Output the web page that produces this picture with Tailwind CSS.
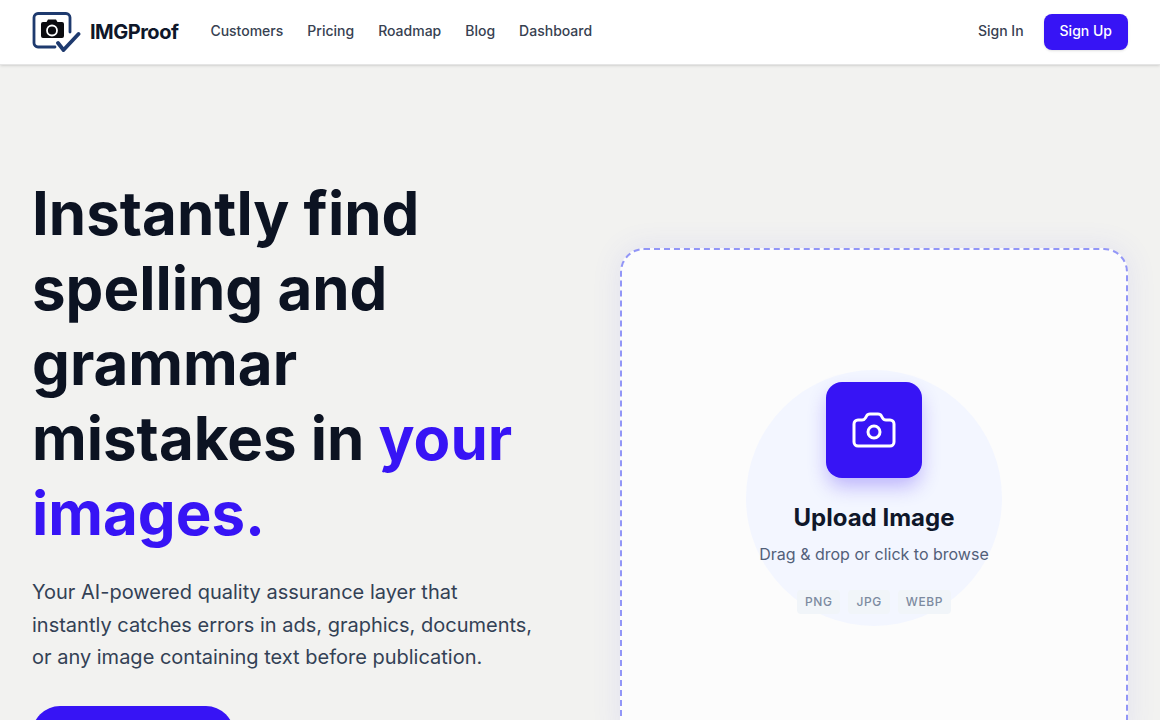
<!DOCTYPE html>
<html lang="en">
  <head>
    <meta charset="UTF-8" />
    <meta name="viewport" content="width=device-width, initial-scale=1.0" />
    <title>IMGProof</title>
    <script src="https://cdn.jsdelivr.net/npm/@tailwindcss/browser@4"></script>
  </head>
  <body class="bg-[#f2f2f0] font-['Inter',sans-serif] antialiased">
    <div class="h-[720px] overflow-hidden">
      <!-- nav -->
      <header class="relative z-10 bg-white h-[65px] border-b border-[#e5e5e5] shadow-sm flex items-center justify-between px-8">
        <div class="flex items-center">
          <a class="flex items-center gap-[9px] mr-8">
            <svg class="w-[49px] h-[42px]" viewBox="0 0 49 42" fill="none">
              <path d="M23 36H6a4 4 0 0 1-4-4V6.500a4 4 0 0 1 4-4h28a4 4 0 0 1 4 4V21" stroke="#1e3a6e" stroke-width="2.800" stroke-linecap="round" />
              <path d="M9 13a2 2 0 0 1 2-2h3.500l1.500-2.500h8l1.500 2.500H30a2 2 0 0 1 2 2v12a2 2 0 0 1-2 2H11a2 2 0 0 1-2-2z" fill="#0b0b0f" />
              <circle cx="20" cy="19.500" r="5" fill="#0b0b0f" stroke="#fff" stroke-width="1.800" />
              <path d="M26 32l5.500 7L46.500 23" stroke="#1e3a6e" stroke-width="3.800" stroke-linecap="round" stroke-linejoin="round" />
            </svg>
            <span class="text-[20px] font-bold tracking-[-0.5px] text-[#0f172a]">IMGProof</span>
          </a>
          <nav class="flex items-center gap-6 text-sm font-medium text-[#374151] pb-0.5">
            <a>Customers</a>
            <a>Pricing</a>
            <a>Roadmap</a>
            <a>Blog</a>
            <a>Dashboard</a>
          </nav>
        </div>
        <div class="flex items-center gap-5 text-sm font-medium">
          <a class="text-[#374151] pb-0.5">Sign In</a>
          <a class="bg-[#3714f5] text-white h-9 px-4 pb-0.5 rounded-lg flex items-center shadow-sm">Sign Up</a>
        </div>
      </header>

      <!-- hero -->
      <main class="grid grid-cols-2 gap-20 px-8 pt-[111px]">
        <div>
          <h1 class="text-[60px] leading-[75px] font-bold text-[#0c1322]">
            Instantly find spelling and grammar mistakes in
            <span class="text-[#3714f5]">your images.</span>
          </h1>
          <p class="mt-[25px] text-[20px] leading-[32.500px] text-[#334155]">
            Your AI-powered quality assurance layer that instantly catches errors in ads, graphics, documents, or any image containing text before publication.
          </p>
          <a class="mt-8 w-[202px] h-14 rounded-full bg-[#3714f5] block"></a>
        </div>

        <div class="mt-[72px] h-[500px] rounded-3xl border-2 border-dashed border-[#9296f7] bg-[#fcfcfc] shadow-[0_0_30px_rgba(80,80,245,0.1)] flex items-center justify-center">
          <div class="w-64 h-64 rounded-full bg-[#f3f6ff] flex flex-col items-center">
            <div class="mt-3 w-24 h-24 rounded-2xl bg-[#3714f5] flex items-center justify-center shadow-[0_10px_20px_-2px_rgba(55,20,245,0.3)]">
              <svg class="w-12 h-12" viewBox="0 0 24 24" fill="none" stroke="#fff" stroke-width="1.500" stroke-linecap="round" stroke-linejoin="round">
                <path d="M13.997 4a2 2 0 0 1 1.760 1.050l.486.900A2 2 0 0 0 18.003 7H20a2 2 0 0 1 2 2v9a2 2 0 0 1-2 2H4a2 2 0 0 1-2-2V9a2 2 0 0 1 2-2h1.997a2 2 0 0 0 1.759-1.048l.489-.904A2 2 0 0 1 10.004 4z" />
                <circle cx="12" cy="13" r="3" />
              </svg>
            </div>
            <h2 class="mt-6 text-2xl font-bold leading-8 text-[#0f172a]">Upload Image</h2>
            <p class="mt-2 text-base leading-6 text-[#526079]">Drag &amp; drop or click to browse</p>
            <div class="mt-6 flex gap-2 text-xs font-medium tracking-wider text-[#7c8aa0]">
              <span class="bg-[#f1f5f9] rounded px-2 py-1">PNG</span>
              <span class="bg-[#f1f5f9] rounded px-2 py-1">JPG</span>
              <span class="bg-[#f1f5f9] rounded px-2 py-1">WEBP</span>
            </div>
          </div>
        </div>
      </main>
    </div>
  </body>
</html>
